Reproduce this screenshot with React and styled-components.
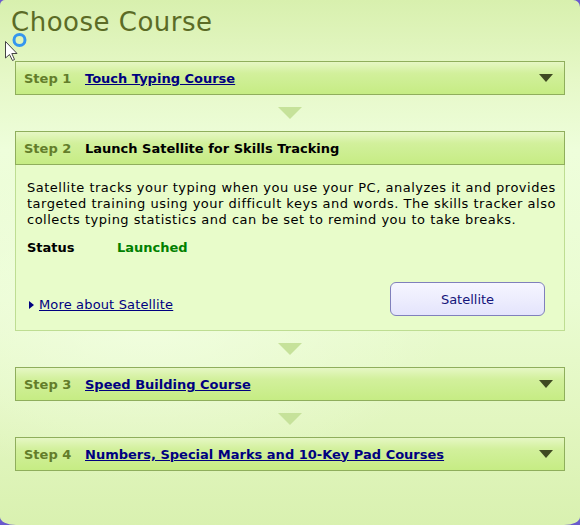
import React from "react";
import styled, { createGlobalStyle } from "styled-components";

const GlobalStyle = createGlobalStyle`
  html, body {
    margin: 0;
    padding: 0;
    background: #6a5acd;
  }
  body {
    font-family: "DejaVu Sans", Verdana, sans-serif;
  }
`;

const steps = [
  { n: 1, title: "Touch Typing Course", link: true },
  { n: 2, title: "Launch Satellite for Skills Tracking", open: true },
  { n: 3, title: "Speed Building Course", link: true },
  { n: 4, title: "Numbers, Special Marks and 10-Key Pad Courses", link: true },
];

const descLines = [
  "Satellite tracks your typing when you use your PC, analyzes it and provides",
  "targeted training using your difficult keys and words. The skills tracker also",
  "collects typing statistics and can be set to remind you to take breaks.",
];

function Caret() {
  return (
    <CaretIcon width="14" height="8" viewBox="0 0 14 8">
      <path d="M0 0 H14 L7 8 Z" fill="#3f4a22" />
    </CaretIcon>
  );
}

function Connector() {
  return (
    <ConnectorRow>
      <svg width="24" height="12" viewBox="0 0 24 12">
        <path d="M0 0 H24 L12 12 Z" fill="#c6e29a" />
      </svg>
    </ConnectorRow>
  );
}

// busy pointer captured in the screenshot
function Cursor() {
  return (
    <CursorLayer width="30" height="32" viewBox="0 0 30 32">
      <path
        d="M5.5 11.5 L5.5 28 L9.5 24.5 L12.5 30.5 L14.5 29.5 L11.8 23.5 L17 23.5 Z"
        fill="#fff"
        stroke="#444"
        strokeWidth="1"
        strokeLinejoin="round"
      />
      <circle cx="19.5" cy="10" r="5.5" fill="none" stroke="#3596ee" strokeWidth="3" />
    </CursorLayer>
  );
}

export default function App() {
  return (
    <>
      <GlobalStyle />
      <Panel>
        <Title>Choose Course</Title>
        <Cursor />
        <StepList>
          {steps.map((s, i) => (
            <React.Fragment key={s.n}>
              {i > 0 && <Connector />}
              <Step>
                <StepHeader>
                  <StepNum>Step {s.n}</StepNum>
                  {s.link ? (
                    <StepLink href="#">{s.title}</StepLink>
                  ) : (
                    <StepTitle>{s.title}</StepTitle>
                  )}
                  {!s.open && <Caret />}
                </StepHeader>
                {s.open && (
                  <StepBody>
                    <Desc>
                      {descLines.map((l) => (
                        <DescLine key={l}>{l}</DescLine>
                      ))}
                    </Desc>
                    <StatusRow>
                      <StatusLabel>Status</StatusLabel>
                      <StatusValue>Launched</StatusValue>
                    </StatusRow>
                    <BodyFooter>
                      <MoreLink href="#">
                        <svg width="5" height="8" viewBox="0 0 5 8">
                          <path d="M0 0 L5 4 L0 8 Z" fill="#000080" />
                        </svg>
                        <span>More about Satellite</span>
                      </MoreLink>
                      <SatButton>Satellite</SatButton>
                    </BodyFooter>
                  </StepBody>
                )}
              </Step>
            </React.Fragment>
          ))}
        </StepList>
      </Panel>
    </>
  );
}

const Panel = styled.div`
  position: relative;
  width: 580px;
  height: 525px;
  box-sizing: border-box;
  border-radius: 5px 7px 16px 16px / 5px 7px 8px 8px;
  overflow: hidden;
  background:
    radial-gradient(ellipse 300px 160px at 150px 320px, rgba(244, 255, 230, 0.7), rgba(244, 255, 230, 0) 100%),
    linear-gradient(
      to bottom,
      #d8f0ae 0px,
      #e6f8c8 80px,
      #eefedb 150px,
      #eafcd2 300px,
      #e2f6c0 420px,
      #d9f1b0 525px
    );
`;

const Title = styled.h1`
  margin: 0;
  padding: 5px 0 0 11px;
  height: 56px;
  box-sizing: border-box;
  font-family: "DejaVu Sans", Verdana, sans-serif;
  font-weight: normal;
  font-size: 26px;
  line-height: 34px;
  color: #5b6b26;
  letter-spacing: 0.5px;
`;

const CursorLayer = styled.svg`
  position: absolute;
  left: 0;
  top: 30px;
`;

const StepList = styled.div`
  display: flex;
  flex-direction: column;
  padding: 5px 15px 0 15px;
`;

const Step = styled.div`
  display: flex;
  flex-direction: column;
`;

const StepHeader = styled.div`
  display: flex;
  align-items: center;
  height: 34px;
  box-sizing: border-box;
  padding: 0 11px 0 8px;
  border: 1px solid #8fae5c;
  background: linear-gradient(to bottom, #e6f7c4 0%, #d2f09c 35%, #c6ec84 100%);
  font-size: 13px;
  font-weight: bold;
`;

const StepNum = styled.span`
  width: 61px;
  color: #637d2a;
`;

const StepLink = styled.a`
  flex: 1;
  color: #000080;
  text-decoration: underline;
`;

const StepTitle = styled.span`
  flex: 1;
  color: #000;
`;

const CaretIcon = styled.svg`
  display: block;
`;

const ConnectorRow = styled.div`
  display: flex;
  justify-content: center;
  height: 36px;
  align-items: center;
`;

const StepBody = styled.div`
  border: 1px solid #bedd92;
  border-top: none;
  background: #e8fcca;
  padding: 15px 11px 14px 11px;
  font-size: 13px;
  color: #000;
`;

const Desc = styled.div`
  line-height: 16px;
  letter-spacing: 0.5px;
`;

const DescLine = styled.div`
  white-space: nowrap;
`;

const StatusRow = styled.div`
  display: flex;
  margin-top: 12px;
  font-weight: bold;
  line-height: 16px;
`;

const StatusLabel = styled.span`
  width: 90px;
`;

const StatusValue = styled.span`
  color: #008000;
`;

const BodyFooter = styled.div`
  display: flex;
  align-items: flex-start;
  justify-content: space-between;
  margin-top: 26px;
  padding-right: 8px;
`;

const MoreLink = styled.a`
  display: flex;
  align-items: center;
  gap: 5px;
  margin-top: 15px;
  padding-left: 2px;
  line-height: 16px;
  color: #000080;
  text-decoration: none;
  letter-spacing: 0.15px;
  span {
    text-decoration: underline;
  }
`;

const SatButton = styled.button`
  width: 155px;
  height: 34px;
  border: 1px solid #8080bc;
  border-radius: 6px;
  background: linear-gradient(to bottom, #f6f6ff 0%, #e4e4fc 100%);
  color: #14147a;
  font-family: "DejaVu Sans", Verdana, sans-serif;
  font-size: 13px;
`;
